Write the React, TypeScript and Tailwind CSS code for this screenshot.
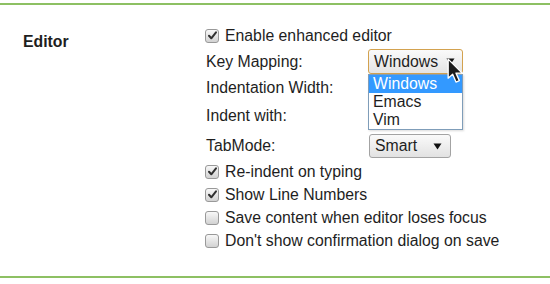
import React from 'react';

const Check = ({ checked }: { checked: boolean }) => (
  <span className="relative inline-flex w-[14px] h-[14px] shrink-0 rounded-[3px] border border-[#999] bg-gradient-to-b from-[#f8f8f8] to-[#d2d2d2] items-center justify-center">
    {checked && (
      <svg width="11" height="11" viewBox="0 0 11 11">
        <path d="M2 5.8 L4.3 8.3 L9 2.4" fill="none" stroke="#303030" strokeWidth="2" strokeLinecap="round" strokeLinejoin="round" />
      </svg>
    )}
  </span>
);

const CheckRow = ({ checked, label }: { checked: boolean; label: string }) => (
  <div className="h-[23px] flex items-center gap-[6px] pl-[205px]">
    <Check checked={checked} />
    <span>{label}</span>
  </div>
);

const Arrow = () => (
  <svg width="9" height="7" viewBox="0 0 9 7">
    <path d="M0.5 0.5 H8.5 L4.5 6.5 Z" fill="#111" />
  </svg>
);

export default function App() {
  return (
    <div className="w-[550px] h-[284px] bg-white text-[15.8px] text-[#1e1e1e] overflow-hidden" style={{ fontFamily: '"Liberation Sans", Arial, sans-serif' }}>
      <div className="pt-[3px]">
        <div className="h-[2px] bg-[#8dc063]" />
      </div>
      <div className="relative mt-[19px] h-[252px]">
        <div className="absolute left-[23px] top-[6px] font-bold">Editor</div>

        <CheckRow checked label="Enable enhanced editor" />

        <div className="mt-[2px] h-[25px] flex items-center pl-[206px]">
          <span className="w-[162px]">Key Mapping:</span>
          <div className="relative">
            <div className="w-[95px] h-[25px] rounded-[3px] border border-[#d3a24f] bg-gradient-to-b from-[#fafafa] to-[#e4e4e4] flex items-center justify-between pl-[5px] pr-[7px]">
              <span>Windows</span>
              <Arrow />
            </div>
          </div>
        </div>

        <div className="h-[27px] flex items-center pl-[206px]">
          <span className="w-[162px]">Indentation Width:</span>
        </div>
        <div className="h-[29px] flex items-center pl-[206px]">
          <span className="w-[162px]">Indent with:</span>
        </div>

        <div className="mt-[4px] h-[24px] flex items-center pl-[206px]">
          <span className="w-[163px]">TabMode:</span>
          <div className="w-[82px] h-[24px] rounded-[3px] border border-[#a3a3a3] bg-gradient-to-b from-[#fafafa] to-[#e2e2e2] flex items-center justify-between pl-[5px] pr-[8px]">
            <span>Smart</span>
            <Arrow />
          </div>
        </div>

        <div className="mt-[2px]">
          <CheckRow checked label="Re-indent on typing" />
          <CheckRow checked label="Show Line Numbers" />
          <CheckRow checked={false} label="Save content when editor loses focus" />
          <CheckRow checked={false} label="Don't show confirmation dialog on save" />
        </div>

        {/* open dropdown list */}
        <div className="absolute left-[368px] top-[50px] w-[95px] h-[56px] bg-white border border-[#7f9db9] shadow-[1px_1px_2px_rgba(0,0,0,0.15)] leading-[18px]">
          <div className="h-[18px] bg-[#3399ff] text-white pl-[4px]">Windows</div>
          <div className="h-[18px] pl-[4px]">Emacs</div>
          <div className="h-[18px] pl-[4px]">Vim</div>
        </div>

        {/* mouse pointer */}
        <svg className="absolute left-[447px] top-[34px]" width="18" height="28" viewBox="0 0 16 25">
          <path d="M1 1 L1 18 L5 14.5 L8 21.5 L11 20.2 L8 13.5 L13.5 13.5 Z" fill="#1c1c1c" stroke="#fff" strokeWidth="1.2" strokeLinejoin="round" />
        </svg>
      </div>
      <div className="h-[2px] bg-[#8dc063]" />
    </div>
  );
}
